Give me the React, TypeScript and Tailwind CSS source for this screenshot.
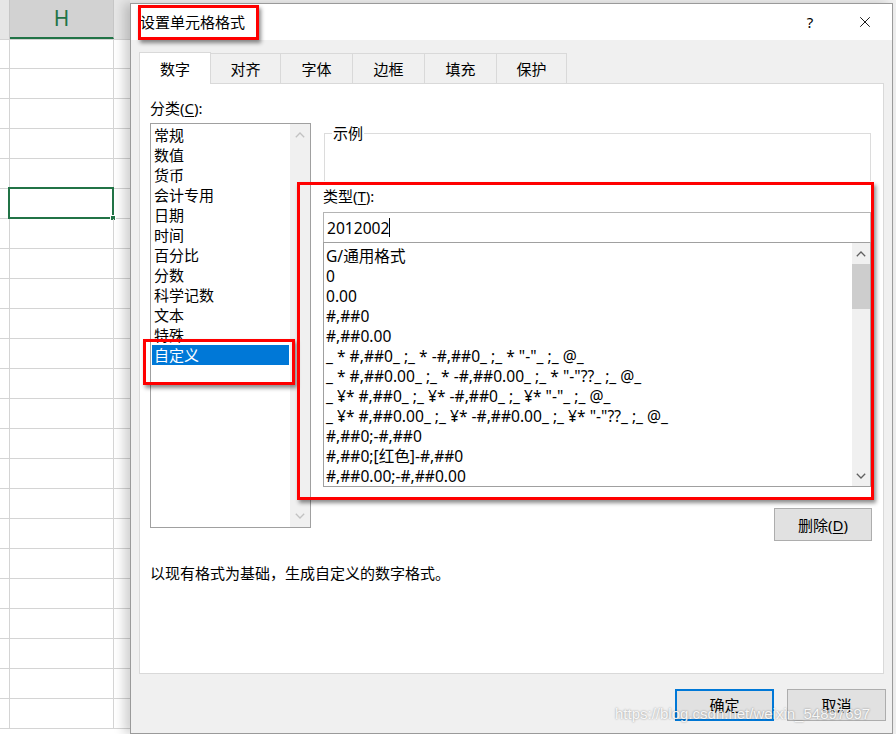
import { X } from "lucide-react";

const categories = [
	"常规",
	"数值",
	"货币",
	"会计专用",
	"日期",
	"时间",
	"百分比",
	"分数",
	"科学记数",
	"文本",
	"特殊",
	"自定义",
];

const formats = [
	"G/通用格式",
	"0",
	"0.00",
	"#,##0",
	"#,##0.00",
	'_ * #,##0_ ;_ * -#,##0_ ;_ * "-"_ ;_ @_',
	'_ * #,##0.00_ ;_ * -#,##0.00_ ;_ * "-"??_ ;_ @_',
	'_ ¥* #,##0_ ;_ ¥* -#,##0_ ;_ ¥* "-"_ ;_ @_',
	'_ ¥* #,##0.00_ ;_ ¥* -#,##0.00_ ;_ ¥* "-"??_ ;_ @_',
	"#,##0;-#,##0",
	"#,##0;[红色]-#,##0",
	"#,##0.00;-#,##0.00",
];

const tabs = [
	{ label: "数字", w: "w-[72px]" },
	{ label: "对齐", w: "w-[70px]" },
	{ label: "字体", w: "w-[72px]" },
	{ label: "边框", w: "w-[72px]" },
	{ label: "填充", w: "w-[72px]" },
	{ label: "保护", w: "w-[70px]" },
];

function Chevron({ up, color }: { up?: boolean; color: string }) {
	return (
		<svg width="10" height="6" viewBox="0 0 10 6">
			<polyline
				points={up ? "0.8,5.2 5,1 9.2,5.2" : "0.8,0.8 5,5 9.2,0.8"}
				fill="none"
				stroke={color}
				strokeWidth="1.3"
			/>
		</svg>
	);
}

function Sheet() {
	const rows = Array.from({ length: 23 }, (_, i) => i);
	return (
		<div className="w-[130px] shrink-0 bg-white flex flex-col">
			<div className="h-[40px] flex border-b border-[#d4d4d4] bg-[#e6e6e6]">
				<div className="w-[10px] border-r border-[#c6c6c6]" />
				<div className="w-[104px] bg-[#d2d2d2] border-r border-[#c6c6c6] border-b-2 border-b-[#217346] flex items-center justify-center text-[21px] text-[#217346] font-[family-name:Noto_Sans,sans-serif]">
					H
				</div>
				<div className="flex-1" />
			</div>
			{rows.map((r) => (
				<div
					key={r}
					className={`${r === 0 ? "h-[29px]" : "h-[30px]"} flex border-b border-[#d4d4d4] shrink-0`}>
					<div className="w-[10px] border-r border-[#d4d4d4]" />
					<div className="w-[104px] border-r border-[#d4d4d4] relative">
						{r === 5 && (
							<div className="absolute -left-[2px] -top-[2px] -right-[1px] -bottom-[1px] border-2 border-[#217346]">
								<div className="absolute -right-[4px] -bottom-[4px] w-[6px] h-[6px] bg-[#217346] border border-white" />
							</div>
						)}
					</div>
					<div className="flex-1" />
				</div>
			))}
		</div>
	);
}

function Dialog() {
	return (
		<div className="flex-1 mt-[3px] mr-[3px] flex flex-col bg-[#f0f0f0] border border-[#9a9a9a] shadow-[-6px_0_10px_rgba(0,0,0,0.18)] text-[15px] text-black font-[family-name:Noto_Sans,Noto_Sans_CJK_SC,sans-serif]">
			{/* title bar */}
			<div className="h-[36px] bg-white flex items-center pl-[9px]">
				<span className="leading-[20px]">设置单元格格式</span>
				<span className="ml-auto w-[16px] text-center leading-[20px] mr-[38px]">?</span>
				<X className="w-[18px] h-[18px] mr-[18px]" strokeWidth={1.2} />
			</div>

			<div className="flex-1 flex flex-col pl-[8px] pt-[12px]">
				{/* tabs */}
				<div className="h-[31px] flex items-end">
					{tabs.map((t, i) =>
						i === 0 ? (
							<div
								key={t.label}
								className={`${t.w} h-[32px] -mb-px relative z-10 bg-white border-x border-t border-[#d9d9d9] flex items-center justify-center leading-[20px]`}>
								{t.label}
							</div>
						) : (
							<div
								key={t.label}
								className={`${t.w} h-[30px] bg-[#f0f0f0] border-t border-r border-[#d9d9d9] flex items-center justify-center leading-[20px]`}>
								{t.label}
							</div>
						)
					)}
				</div>

				{/* panel */}
				<div className="w-[745px] h-[591px] bg-white border border-[#d9d9d9] pl-[10px] pt-[14px] flex flex-col">
					<div className="flex h-[443px]">
						{/* category */}
						<div className="w-[161px] flex flex-col">
							<div className="leading-[20px] h-[20px]">
								分类(<span className="underline underline-offset-2">C</span>):
							</div>
							<div className="mt-[5px] h-[405px] border border-[#a0a0a0] flex">
								<div className="flex-1 pt-[1px] flex flex-col">
									{categories.map((c) => (
										<div
											key={c}
											className={`mx-[1px] pl-[2px] leading-[20px] h-[20px] ${c === "自定义" ? "bg-[#0078d7] text-white" : ""}`}>
											{c}
										</div>
									))}
								</div>
								<div className="w-[20px] bg-[#f0f0f0] flex flex-col justify-between items-center">
									<div className="h-[22px] flex items-center">
										<Chevron up color="#c2c2c2" />
									</div>
									<div className="h-[22px] flex items-center">
										<Chevron color="#c2c2c2" />
									</div>
								</div>
							</div>
						</div>

						{/* type */}
						<div className="ml-[12px] w-[548px] flex flex-col">
							<fieldset className="mt-[25px] h-[58px] ml-[1px] border border-[#dcdcdc] border-b-0">
								<legend className="ml-[7px] px-[1px] leading-[20px]">示例</legend>
							</fieldset>
							<div className="mt-[5px] leading-[20px] h-[20px]">
								类型(<span className="underline underline-offset-2">T</span>):
							</div>
							<div className="mt-[6px] h-[30px] border border-b-0 border-[#b4b4b4] flex items-center pl-[3px] leading-[20px] text-[15.6px]">
								2012002
								<span className="w-px h-[19px] bg-black" />
							</div>
							<div className="h-[245px] border border-[#a0a0a0] flex">
								<div className="flex-1 pt-[3px] pl-[2px] flex flex-col text-[15.6px]">
									{formats.map((f) => (
										<div key={f} className="leading-[20px] h-[20px] whitespace-pre">
											{f}
										</div>
									))}
								</div>
								<div className="w-[18px] bg-[#f0f0f0] flex flex-col items-center">
									<div className="h-[21px] flex items-center">
										<Chevron up color="#606060" />
									</div>
									<div className="w-full h-[45px] bg-[#cdcdcd]" />
									<div className="mt-auto h-[21px] flex items-center">
										<Chevron color="#606060" />
									</div>
								</div>
							</div>
							<button className="mt-[21px] self-end -mr-[1px] w-[98px] h-[33px] shrink-0 bg-[#e1e1e1] border border-[#adadad] leading-[20px]">
								删除(<span className="underline underline-offset-2">D</span>)
							</button>
						</div>
					</div>
					<div className="mt-[22px] leading-[20px]">
						以现有格式为基础，生成自定义的数字格式。
					</div>
				</div>

				{/* buttons */}
				<div className="mt-[15px] flex justify-end pr-[6px] gap-[13px]">
					<button className="w-[99px] h-[32px] bg-[#e1e1e1] border-2 border-[#0078d7] leading-[20px]">
						确定
					</button>
					<button className="w-[99px] h-[32px] bg-[#e1e1e1] border border-[#adadad] leading-[20px]">
						取消
					</button>
				</div>
			</div>
		</div>
	);
}

export default function App() {
	return (
		<div className="relative w-[896px] h-[734px] overflow-hidden flex bg-[#f0f0f0]">
			<Sheet />
			<Dialog />

			{/* annotation boxes */}
			<div className="absolute left-[138px] top-[5px] w-[121px] h-[35px] border-[3px] border-[#ff0000] shadow-[2px_3px_4px_rgba(0,0,0,0.45)]" />
			<div className="absolute left-[143px] top-[339px] w-[152px] h-[46px] border-[3px] border-[#ff0000] shadow-[2px_3px_4px_rgba(0,0,0,0.45)]" />
			<div className="absolute left-[297px] top-[182px] w-[577px] h-[318px] border-[3px] border-[#ff0000] shadow-[2px_3px_4px_rgba(0,0,0,0.45)]" />

			{/* watermark */}
			<div className="absolute left-[615px] top-[704px] text-[15px] leading-[20px] text-white/90 font-[family-name:Liberation_Sans,sans-serif] [text-shadow:0_0_2px_rgba(0,0,0,0.45)]">
				https://blog.csdn.net/weixin_54897697
			</div>
		</div>
	);
}
